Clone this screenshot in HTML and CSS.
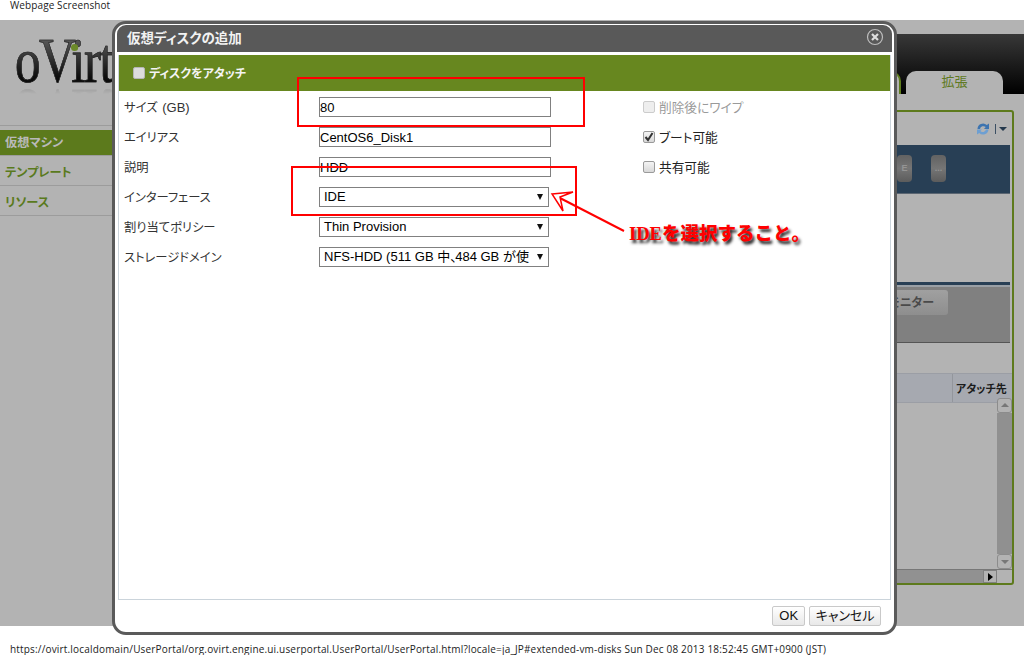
FILE: index.html
```html
<!DOCTYPE html>
<html lang="ja">
<head>
<meta charset="utf-8">
<title>oVirt</title>
<link rel="stylesheet" href="styles.css">
</head>
<body>
<header class="caption">Webpage Screenshot</header>
<main class="screen">
  <div class="masthead">
    <div class="logo-area"><div class="logo">oVirt<i class="logo-dot"></i></div></div>
    <div class="topbar">
      <div class="tab-prev"></div>
      <div class="tab-active">拡張</div>
    </div>
  </div>
  <div class="portal">
    <nav class="side">
      <div class="side-item active">仮想マシン</div>
      <div class="side-item">テンプレート</div>
      <div class="side-item">リソース</div>
    </nav>
    <section class="content">
      <div class="toolbar">
        <svg class="refresh" viewBox="0 0 14 14" width="14" height="14"><path d="M1.500 7A5.500 5.500 0 0 1 10.800 3L13 1.500V7H8l1.700-1.900A3.400 3.400 0 0 0 4 7z" fill="#3d74b0"/><path d="M12.500 7.500A5.500 5.500 0 0 1 3.200 11L1 12.500V7.500h5L4.300 9A3.400 3.400 0 0 0 10 7.500z" fill="#6d9fd2"/></svg>
        <span class="tool-sep"></span>
        <span class="tool-caret"></span>
      </div>
      <div class="vm-band">
        <span class="vm-btn">E</span>
        <span class="vm-btn">...</span>
      </div>
      <div class="sub-panel"><span class="sub-btn">モニター</span></div>
      <div class="table-head"><span class="th">アタッチ先</span></div>
      <div class="table-body">
        <div class="vscroll">
          <span class="scroll-btn"><i class="tri up"></i></span>
          <span class="scroll-thumb"></span>
          <span class="scroll-btn"><i class="tri down"></i></span>
        </div>
      </div>
      <div class="hscroll">
        <span class="hscroll-track"></span>
        <span class="hscroll-btn"><i class="tri right"></i></span>
      </div>
    </section>
  </div>
</main>
<footer class="page-url">https://ovirt.localdomain/UserPortal/org.ovirt.engine.ui.userportal.UserPortal/UserPortal.html?locale=ja_JP#extended-vm-disks Sun Dec 08 2013 18:52:45 GMT+0900 (JST)</footer>

<div class="dialog">
  <div class="dialog-title">
    <span>仮想ディスクの追加</span>
    <svg class="close" viewBox="0 0 18 18" width="18" height="18"><circle cx="9" cy="9" r="7.500" fill="none" stroke="#bdbdbd" stroke-width="1.200"/><path d="M6 6l6 6M12 6l-6 6" stroke="#dedede" stroke-width="2.200"/></svg>
  </div>
  <div class="panel">
    <div class="attach-bar"><span class="check attach-check"></span><span>ディスクをアタッチ</span></div>
    <div class="form">
      <div class="fields">
        <label class="lbl">サイズ <span class="lbl-unit">(GB)</span></label><input class="text-in" value="80">
        <label class="lbl">エイリアス</label><input class="text-in" value="CentOS6_Disk1">
        <label class="lbl">説明</label><input class="text-in" value="HDD">
        <label class="lbl">インターフェース</label><div class="sel"><span class="sel-val">IDE</span><i class="sel-arrow"></i></div>
        <label class="lbl">割り当てポリシー</label><div class="sel"><span class="sel-val">Thin Provision</span><i class="sel-arrow"></i></div>
        <label class="lbl">ストレージドメイン</label><div class="sel"><span class="sel-val">NFS-HDD (511 GB 中<span class="tight">、</span>484 GB が使</span><i class="sel-arrow"></i></div>
      </div>
      <div class="options">
        <div class="opt disabled"><span class="check"></span>削除後にワイプ</div>
        <div class="opt"><span class="check">
          <svg class="tick" viewBox="0 0 10 10" width="10" height="10"><path d="M1.500 5l2.500 3 4.500-7" fill="none" stroke="#333" stroke-width="2"/></svg>
        </span>ブート可能</div>
        <div class="opt"><span class="check"></span>共有可能</div>
      </div>
    </div>
  </div>
  <div class="dialog-foot">
    <button class="btn">OK</button>
    <button class="btn btn-cancel">キャンセル</button>
  </div>
</div>

<svg class="marks" viewBox="0 0 1024 655" width="1024" height="655">
  <rect x="298" y="78" width="286" height="48" fill="none" stroke="#f00" stroke-width="2"/>
  <rect x="292" y="167" width="284" height="48" fill="none" stroke="#f00" stroke-width="2"/>
  <path d="M624 231L558 197" stroke="#f00" stroke-width="2" fill="none"/>
  <path d="M552 194L573 192L560 197L563 211Z" fill="#fff" stroke="#f00" stroke-width="1.500" stroke-linejoin="miter"/>
</svg>
<div class="note"><span class="note-latin">IDE</span>を選択すること。</div>
</body>
</html>
```
FILE: styles.css
```css
* { box-sizing: border-box; }
html, body { margin: 0; padding: 0; }
body {
  width: 1024px;
  height: 655px;
  overflow: hidden;
  background: #fff;
  position: relative;
  display: flex;
  flex-direction: column;
  font-family: "Liberation Sans", "Noto Sans CJK JP", sans-serif;
}
.caption {
  height: 20px;
  padding: 0 10px;
  font: 10px/11px "Open Sans", sans-serif;
  letter-spacing: .1px;
  color: #222;
}
.screen {
  height: 608px;
  background: #b3b3b3;
  display: flex;
  flex-direction: column;
  overflow: hidden;
}
.page-url {
  flex: 1;
  padding: 18px 10px 0;
  font: 10px/11px "Open Sans", sans-serif;
  letter-spacing: .175px;
  color: #222;
  white-space: nowrap;
}

/* backdrop page */
.masthead { display: flex; height: 74px; padding-top: 14px; }
.logo-area { width: 300px; }
.logo {
  position: relative;
  width: 150px;
  margin: -6px 0 0 15px;
  font: 64px/66px "Liberation Serif", serif;
  letter-spacing: -2px;
  background: linear-gradient(#555 20%, #0c0c0c 75%);
  -webkit-background-clip: text;
  background-clip: text;
  color: transparent;
  -webkit-text-stroke: .6px #222;
  transform: scaleX(.8);
  transform-origin: left top;
  -webkit-box-reflect: below -16px linear-gradient(transparent 76%, rgba(0,0,0,.35));
}
.logo-dot {
  position: absolute;
  left: 70px;
  top: 16px;
  width: 9px;
  height: 7px;
  border-radius: 50%;
  background: #6c8a2a;
}
.topbar {
  flex: 1;
  display: flex;
  align-items: flex-end;
  justify-content: flex-end;
  gap: 5px;
  padding-right: 21px;
  background: linear-gradient(#383838, #000);
}
.tab-prev {
  width: 97px;
  height: 23px;
  background: #b3b3b3;
  border: solid #5f7d1c;
  border-width: 2px 2px 0 0;
  border-radius: 0 10px 0 0;
}
.tab-active {
  width: 97px;
  height: 23px;
  background: #b3b3b3;
  border-radius: 10px 10px 0 0;
  color: #5f7a22;
  font: 13px/19px "Noto Sans CJK JP", sans-serif;
  text-align: center;
}
.portal { flex: 1; display: flex; padding: 16px 10px 41px 0; }
.side { width: 150px; padding-top: 15px; }
.side-item {
  height: 30px;
  padding-left: 5px;
  border-bottom: 1px solid #9c9c9c;
  color: #5a7a1d;
  font: 700 12.200px/32px "Noto Sans CJK JP", sans-serif;
  font-feature-settings: "palt";
}
.side-item.active {
  height: 31px;
  border-top: 1px solid #9c9c9c;
  padding-top: 4px;
  background: linear-gradient(#b3b3b3 4px, #5c7a1c 4px);
  color: #b9b9b9;
  line-height: 25px;
}
.content {
  flex: 1;
  display: flex;
  flex-direction: column;
  border: 2px solid #5d7a1c;
  border-radius: 3px;
}
.toolbar {
  height: 33px;
  display: flex;
  align-items: center;
  justify-content: flex-end;
  padding: 1px 3px 0 0;
}
.refresh { margin-right: 5px; }
.tool-sep { width: 1px; height: 10px; background: #3b4f63; margin-right: 3px; }
.tool-caret {
  width: 0; height: 0;
  border: 4px solid transparent;
  border-top: 4px solid #24384c;
  border-bottom: 0;
  margin-right: 2px;
}
.vm-band {
  height: 49px;
  margin-right: 2px;
  background: #283f55;
  border-bottom: 1px solid #5b6672;
  display: flex;
  justify-content: flex-end;
  align-items: center;
  gap: 19px;
  padding-right: 64px;
}
.vm-btn {
  width: 15px;
  height: 27px;
  overflow: hidden;
  border-radius: 4px;
  background: linear-gradient(#626262, #757575 50%, #5c5c5c);
  color: #949494;
  font: 700 9px/27px "Liberation Sans", sans-serif;
  text-align: center;
}
.sub-panel {
  margin: 88px 2px 0 0;
  height: 61px;
  border-top: 3px solid #283f55;
  background: linear-gradient(#9aa0a6 2px, #808080 2px);
  border-bottom: 1px solid #555;
  display: flex;
  justify-content: flex-end;
  align-items: flex-start;
  padding: 5px 62px 0 0;
}
.sub-btn {
  width: 100px;
  height: 25px;
  text-align: right;
  padding-right: 14px;
  background: linear-gradient(#a0a0a0, #8e8e8e);
  border-radius: 3px;
  color: #4a4a4a;
  font: 700 12px/24px "Noto Sans CJK JP", sans-serif;
  font-feature-settings: "palt";
}
.table-head {
  margin-top: 30px;
  height: 30px;
  background: #a6a9b0;
  border-top: 1px solid #9b9ea5;
  border-bottom: 1px solid #9b9ea5;
  display: flex;
  justify-content: flex-end;
}
.th {
  width: 60px;
  padding-left: 3px;
  border-left: 1px solid #93969c;
  color: #1c1c1c;
  font: 700 11px/28px "Noto Sans CJK JP", sans-serif;
  font-feature-settings: "palt";
  white-space: nowrap;
}
.table-body { flex: 1; display: flex; justify-content: flex-end; }
.vscroll {
  width: 15px;
  margin-top: -5px;
  display: flex;
  flex-direction: column;
}
.scroll-btn {
  height: 15px;
  background: #b3b3b3;
  border: 1px solid #8c8c8c;
  border-radius: 3px;
  display: flex;
  align-items: center;
  justify-content: center;
}
.scroll-thumb { flex: 1; background: #909090; }
.tri { width: 0; height: 0; border: 4px solid transparent; display: block; }
.tri.up { border-top: 0; border-bottom: 4px solid #777; }
.tri.down { border-bottom: 0; border-top: 4px solid #777; }
.tri.right { border-right: 0; border-left: 5px solid #000; }
.hscroll { height: 14px; display: flex; padding-right: 15px; border-top: 1px solid #777; }
.hscroll-track { flex: 1; background: #919191; }
.hscroll-btn {
  width: 14px;
  background: #b3b3b3;
  border: 1px solid #808080;
  display: flex;
  align-items: center;
  justify-content: center;
}

/* dialog */
.dialog {
  position: absolute;
  left: 112px;
  top: 21px;
  width: 785px;
  height: 614px;
  background: #fff;
  border: 3px solid #5a5a5a;
  border-radius: 14px;
  padding: 1px 2px 2px;
  display: flex;
  flex-direction: column;
}
.dialog-title {
  height: 27px;
  flex: none;
  padding: 0 8px 3px 10px;
  background: #595959;
  border-radius: 9px 9px 0 0;
  color: #f2f2f2;
  font: 700 13.500px/24px "Noto Sans CJK JP", sans-serif;
  font-feature-settings: "palt";
  display: flex;
  justify-content: space-between;
  align-items: center;
}
.panel {
  flex: 1;
  margin: 3px 1px 0;
  border: solid #cbd4db;
  border-width: 0 1px 1px;
  display: flex;
  flex-direction: column;
}
.attach-bar {
  height: 36px;
  padding-left: 14px;
  background: #67871f;
  color: #f4f4f4;
  font: 700 12px/36px "Noto Sans CJK JP", sans-serif;
  font-feature-settings: "palt";
  display: flex;
  align-items: center;
  gap: 4px;
}
.check {
  width: 12px;
  height: 12px;
  flex: none;
  display: block;
  border: 1px solid #9a9a9a;
  border-radius: 2px;
  background: linear-gradient(#f4f4f4, #d8d8d8);
}
.tick { display: block; }
.attach-check { border-color: #b5b5b5; background: #dcdcdc; }
.form { flex: 1; display: flex; padding: 6px 0 0 5px; }
.fields {
  display: grid;
  grid-template-columns: 195px 232px;
  grid-auto-rows: 20px;
  row-gap: 10px;
  align-content: start;
  align-items: stretch;
}
.lbl {
  color: #333;
  font: 12.300px/21px "Noto Sans CJK JP", sans-serif;
  font-feature-settings: "palt";
}
.lbl-unit { font-family: "Liberation Sans", sans-serif; font-size: 13px; margin-left: 2px; }
.text-in {
  width: 232px;
  height: 20px;
  padding: 0;
  margin: 0;
  border: 1px solid #808080;
  border-radius: 0;
  outline: 0;
  background: #fff;
  color: #000;
  font: 13px "Liberation Sans", "Noto Sans CJK JP", sans-serif;
}
.sel {
  width: 230px;
  height: 20px;
  padding: 0 4px;
  border: 1px solid #808080;
  display: flex;
  align-items: center;
  justify-content: space-between;
  gap: 4px;
  color: #000;
  font: 13px/18px "Liberation Sans", "Noto Sans CJK JP", sans-serif;
}
.sel-val { white-space: nowrap; flex: 1; }
.tight { letter-spacing: -8px; }
.sel-arrow {
  flex: none;
  width: 0; height: 0;
  margin-right: 1px;
  border: solid transparent;
  border-width: 6px 3.500px 0;
  border-top-color: #111;
}
.options {
  margin-left: 92px;
  display: flex;
  flex-direction: column;
  gap: 10px;
}
.opt {
  height: 20px;
  display: flex;
  align-items: center;
  gap: 4px;
  color: #222;
  font: 12.700px/20px "Noto Sans CJK JP", sans-serif;
  font-feature-settings: "palt";
}
.opt.disabled { color: #9a9a9a; }
.opt.disabled .check { background: #eee; border-color: #ccc; }
.dialog-foot {
  flex: none;
  height: 30px;
  padding: 6px 11px 0 0;
  display: flex;
  justify-content: flex-end;
  gap: 4px;
}
.btn {
  height: 20px;
  padding: 0 6px;
  border: 1px solid #c9c9c9;
  border-radius: 2px;
  background: linear-gradient(#fff, #e8e8e8);
  color: #111;
  font: 13px/18px "Liberation Sans", "Noto Sans CJK JP", sans-serif;
}
.btn-cancel { font-feature-settings: "palt"; padding: 0 5.500px; }

/* hand-drawn annotations */
.marks { position: absolute; left: 0; top: 0; pointer-events: none; }
.note {
  position: absolute;
  left: 629px;
  top: 219px;
  color: #f00;
  font: 900 18.500px/26px "Noto Sans CJK JP", sans-serif;
  text-shadow: 2px 3px 3px #222;
  white-space: nowrap;
}
.note-latin { font-family: "Liberation Serif", serif; }
```
